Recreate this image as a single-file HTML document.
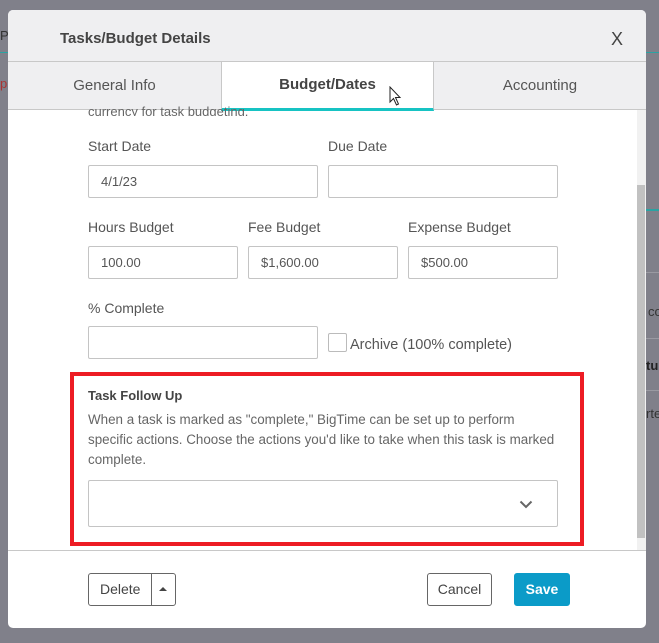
<!DOCTYPE html>
<html><head><meta charset="utf-8"><style>
*{box-sizing:border-box;margin:0;padding:0}
body{width:659px;height:643px;background:#80808a;font-family:"Liberation Sans",sans-serif;position:relative;overflow:hidden;color:#555}
.a{position:absolute}
.modal{left:8px;top:10px;width:638px;height:618px;background:#fff;border-radius:5px;overflow:hidden}
.hdr{left:0;top:0;width:638px;height:51px;background:#efeff1}
.tabs{left:0;top:51px;width:638px;height:49px;background:#efeff1;border-top:1px solid #c8c8c8;border-bottom:1px solid #c8c8c8}
.tab{top:0;height:48px;line-height:48px;text-align:center;font-size:15px;color:#555}
.lbl{font-size:14px;color:#555}
.in{border:1px solid #c4c4c4;border-radius:2px;height:33px;font-size:13px;color:#555;padding-left:12px;line-height:31px;background:#fff}
.btn{border:1px solid #666;border-radius:3px;height:33px;line-height:31px;font-size:14px;text-align:center;color:#444;background:#fff}
</style></head><body>
<div class="a" style="left:0;top:52px;width:659px;height:1px;background:#2aa3a3"></div>
<div class="a" style="left:646px;top:209px;width:13px;height:2px;background:#2aa3a3"></div>
<div class="a" style="left:646px;top:272px;width:13px;height:1px;background:#9a9aa2"></div>
<div class="a" style="left:646px;top:338px;width:13px;height:1px;background:#9a9aa2"></div>
<div class="a" style="left:646px;top:390px;width:13px;height:1px;background:#9a9aa2"></div>
<div class="a" style="left:648px;top:304px;font-size:13px;color:#333">co</div>
<div class="a" style="left:646px;top:358px;font-size:13px;color:#222;font-weight:bold">tu</div>
<div class="a" style="left:646px;top:406px;font-size:13px;color:#333">rte</div>
<div class="a modal">
 <div class="a hdr"></div>
 <div class="a" style="left:52px;top:20px;font-size:15px;font-weight:bold;color:#444">Tasks/Budget Details</div>
 <div class="a" style="left:603px;top:19px;font-size:18px;color:#444">X</div>
 <div class="a tabs">
  <div class="a tab" style="left:0;width:213px">General Info</div>
  <div class="a tab" style="left:213px;width:213px;background:#fff;border-left:1px solid #c8c8c8;border-right:1px solid #c8c8c8;font-weight:bold;color:#444;border-bottom:3px solid #17c3c3;height:49px;line-height:46px">Budget/Dates</div>
  <div class="a tab" style="left:426px;width:212px">Accounting</div>
 </div>
 <svg class="a" style="left:381px;top:76px" width="14" height="22" viewBox="0 0 14 22"><path d="M1 1 L1 16 L4.5 12.5 L7.5 19 L9.5 18 L6.5 11.5 L11 11.5 Z" fill="#fff" stroke="#222" stroke-width="1"/></svg>
 <div class="a" style="left:629px;top:100px;width:9px;height:440px;background:#f1f1f1"></div>
 <div class="a" style="left:629px;top:175px;width:8px;height:353px;background:#c1c1c1"></div>
 <div class="a lbl" style="left:80px;top:96px;font-size:13px;line-height:12px;height:10px;overflow:hidden;color:#666">currency for task budgeting.</div>
 <div class="a lbl" style="left:80px;top:128px">Start Date</div>
 <div class="a lbl" style="left:320px;top:128px">Due Date</div>
 <div class="a in" style="left:80px;top:155px;width:230px">4/1/23</div>
 <div class="a in" style="left:320px;top:155px;width:230px"></div>
 <div class="a lbl" style="left:80px;top:209px">Hours Budget</div>
 <div class="a lbl" style="left:240px;top:209px">Fee Budget</div>
 <div class="a lbl" style="left:400px;top:209px">Expense Budget</div>
 <div class="a in" style="left:80px;top:236px;width:150px">100.00</div>
 <div class="a in" style="left:240px;top:236px;width:150px">$1,600.00</div>
 <div class="a in" style="left:400px;top:236px;width:150px">$500.00</div>
 <div class="a lbl" style="left:80px;top:290px">% Complete</div>
 <div class="a in" style="left:80px;top:316px;width:230px"></div>
 <div class="a" style="left:320px;top:323px;width:19px;height:19px;border:1px solid #bbb;border-radius:2px"></div>
 <div class="a lbl" style="left:342px;top:327px;font-size:14.5px">Archive (100% complete)</div>
 <div class="a" style="left:62px;top:362px;width:514px;height:174px;border:4px solid #ed1c24"></div>
 <div class="a" style="left:80px;top:378px;font-size:13px;font-weight:bold;color:#444">Task Follow Up</div>
 <div class="a" style="left:80px;top:400px;width:470px;font-size:13.4px;line-height:20px;color:#666">When a task is marked as "complete," BigTime can be set up to perform specific actions. Choose the actions you'd like to take when this task is marked complete.</div>
 <div class="a in" style="left:80px;top:470px;width:470px;height:47px"></div>
 <svg class="a" style="left:511px;top:490px" width="14" height="9" viewBox="0 0 14 9"><path d="M1.5 1.5 L7 7 L12.5 1.5" fill="none" stroke="#666" stroke-width="2"/></svg>
 <div class="a" style="left:0;top:540px;width:638px;height:1px;background:#c8c8c8"></div>
 <div class="a btn" style="left:80px;top:563px;width:88px;text-align:left;padding-left:11px">Delete</div>
 <div class="a" style="left:143px;top:563px;width:1px;height:33px;background:#666"></div>
 <svg class="a" style="left:150px;top:576px" width="10" height="6" viewBox="0 0 10 6"><path d="M1 5 L5 1 L9 5 Z" fill="#444"/></svg>
 <div class="a btn" style="left:419px;top:563px;width:65px">Cancel</div>
 <div class="a btn" style="left:506px;top:563px;width:56px;background:#0b9bc8;border-color:#0b9bc8;color:#fff;font-weight:bold">Save</div>
</div>
<div class="a" style="left:0;top:28px;font-size:13px;color:#333">P</div>
<div class="a" style="left:0;top:76px;font-size:13px;color:#a33">p</div>
</body></html>
